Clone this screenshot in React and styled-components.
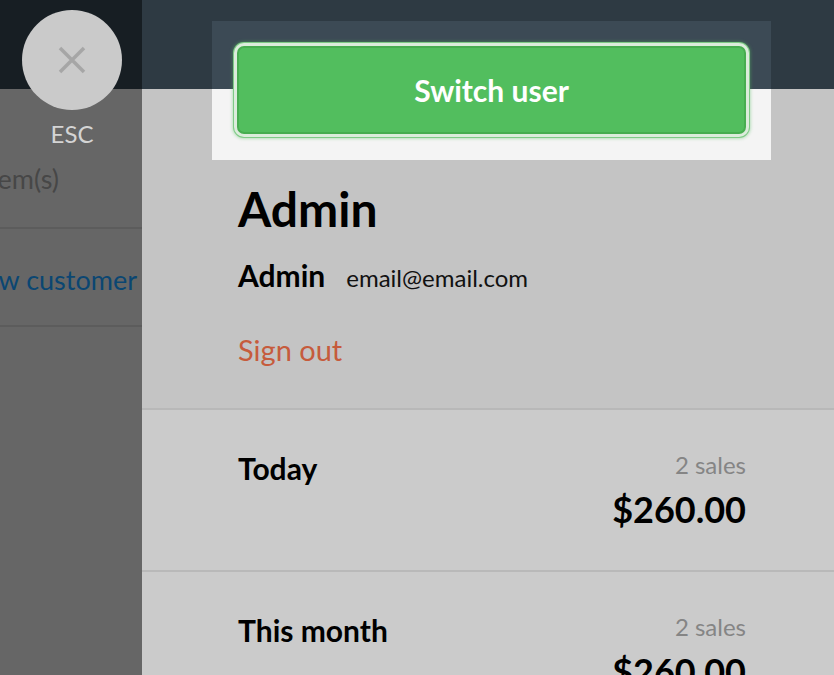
import React from "react";
import styled, { createGlobalStyle } from "styled-components";

const GlobalStyle = createGlobalStyle`
  html, body {
    margin: 0;
    padding: 0;
    background: #c4c4c4;
    font-family: Lato, "Open Sans", sans-serif;
  }
  * { box-sizing: border-box; }
`;

const Page = styled.div`
  display: flex;
  width: 834px;
  height: 675px;
  overflow: hidden;
`;

/* ---- left side (dimmed cart behind the drawer) ---- */

const LeftPane = styled.div`
  position: relative;
  width: 142px;
  flex-shrink: 0;
  background: #666666;
  display: flex;
  flex-direction: column;
`;

const LeftTop = styled.div`
  height: 89px;
  background: #171e23;
`;

const LeftRow = styled.div`
  display: flex;
  justify-content: flex-end;
  white-space: nowrap;
  overflow: hidden;
  height: ${(p) => p.h}px;
  padding-top: ${(p) => p.pt}px;
  padding-right: ${(p) => p.pr}px;
  border-bottom: ${(p) => (p.line ? "2px solid #5c5c5c" : "none")};
  font-size: 27px;
  line-height: 1.2;
  color: ${(p) => p.color};
`;

const CloseButton = styled.button`
  position: absolute;
  left: 22px;
  top: 10px;
  width: 100px;
  height: 100px;
  border-radius: 50%;
  border: none;
  background: #cacaca;
  display: flex;
  align-items: center;
  justify-content: center;
  padding: 0;
  cursor: pointer;
`;

const EscLabel = styled.div`
  position: absolute;
  left: 22px;
  top: 120px;
  width: 100px;
  text-align: center;
  font-size: 24px;
  line-height: 1.2;
  color: #d4d4d4;
`;

/* ---- right drawer ---- */

const Drawer = styled.div`
  flex: 1;
  display: flex;
  flex-direction: column;
  background: #c4c4c4;
`;

const TopArea = styled.div`
  padding: 21px 0 0 70px;
  background: linear-gradient(to bottom, #2e3a43 89px, transparent 89px);
`;

const Spotlight = styled.div`
  width: 559px;
  height: 139px;
  padding: 25px 25px 26px;
  background: linear-gradient(to bottom, #3c4a55 68px, #f4f4f4 68px);
`;

const SwitchButton = styled.button`
  width: 100%;
  height: 88px;
  border: 2px solid #47ad50;
  border-radius: 7px;
  background: #52be5e;
  color: #ffffff;
  font-family: Lato, sans-serif;
  font-weight: 700;
  font-size: 30px;
  box-shadow: 0 0 0 3px #dcecdc, 0 0 0 4px #7fcb86,
    0 0 3px 5px rgba(82, 190, 94, 0.35);
  cursor: pointer;
`;

const Profile = styled.div`
  padding: 20px 88px 41px 96px;
  border-bottom: 2px solid #b8b8b8;
`;

const Heading = styled.h1`
  margin: 0;
  font-size: 48px;
  font-weight: 700;
  line-height: 1.2;
  color: #000;
`;

const UserLine = styled.div`
  display: flex;
  align-items: baseline;
  gap: 21px;
  margin-top: 19px;
`;

const UserName = styled.span`
  font-size: 30px;
  font-weight: 700;
  line-height: 1.2;
  color: #000;
`;

const Email = styled.span`
  font-size: 24px;
  line-height: 1.2;
  color: #111;
`;

const SignOut = styled.a`
  display: block;
  margin-top: 40px;
  font-size: 29px;
  line-height: 1.2;
  color: #c65b3c;
  cursor: pointer;
`;

const StatRow = styled.div`
  display: flex;
  justify-content: space-between;
  align-items: flex-start;
  height: 162px;
  flex-shrink: 0;
  padding: 40px 88px 0 96px;
  background: #cbcbcb;
  border-bottom: 2px solid #b9b9b9;
`;

const StatLabel = styled.div`
  font-size: 30px;
  font-weight: 700;
  line-height: 1.2;
  color: #000;
`;

const StatValues = styled.div`
  display: flex;
  flex-direction: column;
  align-items: flex-end;
`;

const SalesCount = styled.div`
  font-size: 24px;
  line-height: 29px;
  color: #858585;
`;

const Amount = styled.div`
  margin-top: 9px;
  font-size: 36px;
  font-weight: 700;
  line-height: 1.2;
  color: #000;
`;

const stats = [
  { label: "Today", sales: "2 sales", amount: "$260.00" },
  { label: "This month", sales: "2 sales", amount: "$260.00" },
];

const App = () => {
  return (
    <>
      <GlobalStyle />
      <Page>
        <LeftPane>
          <LeftTop />
          <LeftRow h={140} pt={74} pr={83} color="#474747" line>
            2 item(s)
          </LeftRow>
          <LeftRow h={98} pt={35} pr={5} color="#0b4672" line>
            New customer
          </LeftRow>
          <CloseButton aria-label="Close">
            <svg width="28" height="28" viewBox="0 0 28 28">
              <path
                d="M2 2 L26 26 M26 2 L2 26"
                stroke="#a6a6a6"
                strokeWidth="3.5"
                fill="none"
              />
            </svg>
          </CloseButton>
          <EscLabel>ESC</EscLabel>
        </LeftPane>

        <Drawer>
          <TopArea>
            <Spotlight>
              <SwitchButton>Switch user</SwitchButton>
            </Spotlight>
          </TopArea>

          <Profile>
            <Heading>Admin</Heading>
            <UserLine>
              <UserName>Admin</UserName>
              <Email>email@email.com</Email>
            </UserLine>
            <SignOut>Sign out</SignOut>
          </Profile>

          {stats.map((s) => (
            <StatRow key={s.label}>
              <StatLabel>{s.label}</StatLabel>
              <StatValues>
                <SalesCount>{s.sales}</SalesCount>
                <Amount>{s.amount}</Amount>
              </StatValues>
            </StatRow>
          ))}
        </Drawer>
      </Page>
    </>
  );
};

export default App;
